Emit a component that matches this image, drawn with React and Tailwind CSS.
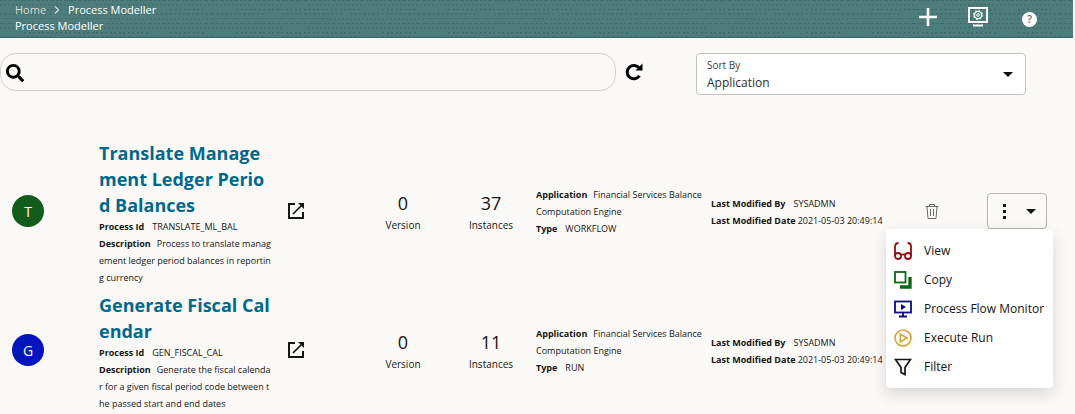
import { FaSearch } from 'react-icons/fa'

const processes = [
    {
        initial: 'T',
        color: 'bg-[#145c1c]',
        name: 'Translate Management Ledger Period Balances',
        id: 'TRANSLATE_ML_BAL',
        description: 'Process to translate management ledger period balances in reporting currency',
        instances: 37,
        type: 'WORKFLOW',
        menuOpen: true,
    },
    {
        initial: 'G',
        color: 'bg-[#0414c0]',
        name: 'Generate Fiscal Calendar',
        id: 'GEN_FISCAL_CAL',
        description: 'Generate the fiscal calendar for a given fiscal period code between the passed start and end dates',
        instances: 11,
        type: 'RUN',
        menuOpen: false,
    },
]

function OpenIcon() {
    return (
        <svg width="18" height="18" viewBox="0 0 18 18" fill="none" stroke="#161513" strokeWidth="2">
            <path d="M8 2H2v14h14v-6" />
            <path d="M6 12 15.5 2.5" strokeWidth="1.700" />
            <path d="M11 1h6v6z" fill="#161513" stroke="none" />
        </svg>
    )
}

function TrashIcon() {
    return (
        <svg width="14" height="16" viewBox="0 0 14 16" fill="none" stroke="#6b6864" strokeWidth="1">
            <path d="M0.5 3.5h13M4.5 3.5v-2h5v2M2 3.5l1 12h8l1-12" />
            <path d="M5.500 6v7M8.500 6v7" />
        </svg>
    )
}

function ViewIcon() {
    return (
        <svg width="18" height="18" viewBox="0 0 18 18" fill="none" stroke="#8f0d12" strokeWidth="1.800">
            <path d="M4.500 1C2.500 1 1 2.500 1 4.500V14M13.500 1c2 0 3.500 1.500 3.500 3.500V14" />
            <circle cx="4" cy="14" r="3" />
            <circle cx="14" cy="14" r="3" />
            <path d="M6 12.500h6" />
        </svg>
    )
}

function CopyIcon() {
    return (
        <svg width="18" height="18" viewBox="0 0 18 18" fill="none" stroke="#0f6614">
            <rect x="1" y="1" width="10.500" height="10.500" strokeWidth="1.800" />
            <path d="M16 6v10H6" strokeWidth="3.400" />
        </svg>
    )
}

function MonitorIcon() {
    return (
        <svg width="18" height="18" viewBox="0 0 18 18" fill="none" stroke="#0b0b8c" strokeWidth="1.800">
            <rect x="1" y="1.500" width="16" height="11" />
            <path d="M9 12.500V16M5 16.500h8" />
            <path d="M7 4v6l5-3z" fill="#0b0b8c" stroke="none" />
        </svg>
    )
}

function RunIcon() {
    return (
        <svg width="18" height="18" viewBox="0 0 18 18" fill="none" stroke="#dba236" strokeWidth="1.600">
            <circle cx="9" cy="9" r="8" />
            <path d="M6.300 5.200v7.600L13 9z" />
        </svg>
    )
}

function FilterIcon() {
    return (
        <svg width="18" height="18" viewBox="0 0 18 18" fill="none" stroke="#161513" strokeWidth="1.700">
            <path d="M1.500 1.500h15L11 9.500V16.500L7 14.500v-5z" />
        </svg>
    )
}

const menuItems = [
    { label: 'View', Icon: ViewIcon },
    { label: 'Copy', Icon: CopyIcon },
    { label: 'Process Flow Monitor', Icon: MonitorIcon },
    { label: 'Execute Run', Icon: RunIcon },
    { label: 'Filter', Icon: FilterIcon },
]

function HeaderTexture() {
    return (
        <svg className="absolute inset-0 h-full w-full" aria-hidden="true">
            <defs>
                <pattern id="weave" width="212" height="23" patternUnits="userSpaceOnUse">
                    <g stroke="#3b6463" fill="none">
                        <path d="M0 0.500H212" strokeDasharray="3 1 2 2 4 2" strokeOpacity="0.6" />
                        <path d="M0 5H70M96 5H212" strokeDasharray="2 2" strokeOpacity="0.9" />
                        <path d="M24 9.500H150M170 9.500H204" strokeDasharray="2 3 2 2" strokeOpacity="0.9" />
                        <path d="M0 14H52M70 14H130M138 14H212" strokeDasharray="2 2 3 2" strokeOpacity="0.9" />
                        <path d="M0 18.500H120" strokeOpacity="0.4" />
                        <path d="M110 19H212" strokeDasharray="2 2" strokeOpacity="0.9" />
                    </g>
                </pattern>
            </defs>
            <rect width="100%" height="100%" fill="url(#weave)" />
        </svg>
    )
}

function Header() {
    return (
        <header className="relative mr-0.5 h-[38px] border-b border-[#3c6766] bg-[#4c7d7b] text-white">
            <HeaderTexture />
            <div className="relative flex justify-between pr-9 pl-[15px]">
                <div>
                    <nav aria-label="Breadcrumb" className="flex h-[18px] items-center gap-2 pt-0.5 text-[11px]">
                        <a href="#home" className="text-[#dcd8d2]">Home</a>
                        <svg width="6" height="8" viewBox="0 0 6 8" fill="none" stroke="#dcd8d2" strokeWidth="1.200">
                            <path d="M1 0.500 4.500 4 1 7.500" />
                        </svg>
                        <span>Process Modeller</span>
                    </nav>
                    <h1 className="text-[11px] leading-4">Process Modeller</h1>
                </div>
                <div className="flex items-center">
                    <button type="button" aria-label="Add process" className="mr-[30px]">
                        <svg width="20" height="18" viewBox="0 0 20 18" stroke="#fff" strokeWidth="2.600">
                            <path d="M10 0v18M1 9h18" />
                        </svg>
                    </button>
                    <button type="button" aria-label="Monitor settings" className="mr-[34px]">
                        <svg width="20" height="20" viewBox="0 0 20 20" fill="none" stroke="#fff" strokeWidth="2">
                            <rect x="1" y="1" width="18" height="14" />
                            <circle cx="10" cy="8" r="3.600" strokeWidth="1.400" />
                            <circle cx="10" cy="8" r="4.600" strokeWidth="1" strokeDasharray="1.600 2" />
                            <circle cx="10" cy="8" r="1.300" strokeWidth="1" />
                            <path d="M5 18.500h10" />
                        </svg>
                    </button>
                    <button type="button" aria-label="Help" className="mt-1 flex size-[15px] items-center justify-center rounded-full bg-white text-[11px] font-semibold text-[#4c7d7b]">
                        ?
                    </button>
                </div>
            </div>
        </header>
    )
}

function Toolbar() {
    return (
        <div className="flex items-center pr-[49px]">
            <div className="flex h-[38px] flex-1 items-center self-start rounded-2xl border border-[#d6d3cf] pt-0.5 pl-[5px]">
                <FaSearch className="size-[18px] shrink-0 text-black" />
                <input type="search" aria-label="Search processes" className="h-full min-w-0 flex-1 bg-transparent px-3 text-[13px] outline-none" />
            </div>
            <button type="button" aria-label="Refresh" className="mr-[53px] ml-[9px] pb-1">
                <svg width="18" height="18" viewBox="0 0 18 18" fill="none" stroke="#000" strokeWidth="3">
                    <path d="M14.500 5.500A6.700 6.700 0 1 0 14.500 12.800" />
                    <path d="M17.500 0.500v7h-7z" fill="#000" stroke="none" />
                </svg>
            </button>
            <div className="relative h-[42px] w-[330px] rounded-sm border border-[#c4c1bd] bg-white">
                <label htmlFor="sort" className="pointer-events-none absolute top-1 left-2.5 text-[10px] leading-[14px] text-[#403d3a]">Sort By</label>
                <select id="sort" className="h-full w-full appearance-none bg-transparent pt-[18px] pr-8 pl-2.5 text-[12px] text-[#302d2a] outline-none">
                    <option>Application</option>
                </select>
                <svg className="pointer-events-none absolute top-[18px] right-3" width="10" height="5" viewBox="0 0 10 5">
                    <path d="M0 0h10L5 5z" />
                </svg>
            </div>
        </div>
    )
}

function ActionMenu() {
    return (
        <ul className="absolute top-full right-[-6px] z-10 w-[167px] rounded-sm bg-white py-[7px] shadow-[0_6px_16px_rgba(0,0,0,0.14)]">
            {menuItems.map(({ label, Icon }) => (
                <li key={label}>
                    <button type="button" className="flex h-[29px] w-full items-center gap-3 pl-2 text-[12px] whitespace-nowrap">
                        <Icon />
                        {label}
                    </button>
                </li>
            ))}
        </ul>
    )
}

function Stat({ value, label }) {
    return (
        <div className="pt-1 text-center">
            <div className="text-[18px] leading-6">{value}</div>
            <div className="text-[10px] leading-5">{label}</div>
        </div>
    )
}

function ProcessRow({ process }) {
    return (
        <li className="grid grid-cols-[87px_188fr_73px_86px_90px_175px_214px_62px_60px] items-center pr-7 pl-3 text-[9px] leading-[17px]">
            <div className={`flex size-8 items-center justify-center rounded-full text-[14px] text-white ${process.color}`}>{process.initial}</div>
            <div className="pt-1 pr-3.5">
                <h2 className="text-[18px] leading-[26px] font-bold break-all text-[#00688c]">{process.name}</h2>
                <p><b className="mr-2">Process Id</b>{process.id}</p>
                <p className="break-all"><b className="mr-1.5">Description</b>{process.description}</p>
            </div>
            <button type="button" aria-label={`Open ${process.name}`} className="w-[18px]"><OpenIcon /></button>
            <Stat value={0} label="Version" />
            <Stat value={process.instances} label="Instances" />
            <div>
                <p><b className="mr-1.5">Application</b>Financial Services Balance Computation Engine</p>
                <p><b className="mr-2">Type</b>{process.type}</p>
            </div>
            <div className="pt-0.5">
                <p><b className="mr-2">Last Modified By</b>SYSADMN</p>
                <p><b className="mr-0.5">Last Modified Date</b>2021-05-03 20:49:14</p>
            </div>
            {process.menuOpen && (
                <>
                    <button type="button" aria-label="Delete process" className="w-[14px]"><TrashIcon /></button>
                    <div className="relative">
                        <button type="button" aria-label="More actions" aria-expanded="true" className="flex h-9 w-full items-center justify-between rounded-sm border border-[#b5b2ad] pr-2.5 pl-[15px]">
                            <svg width="3" height="15" viewBox="0 0 3 15">
                                <path d="M0 0h3v3H0zM0 6h3v3H0zM0 12h3v3H0z" fill="#161513" />
                            </svg>
                            <svg width="10" height="5" viewBox="0 0 10 5">
                                <path d="M0 0h10L5 5z" fill="#161513" />
                            </svg>
                        </button>
                        <ActionMenu />
                    </div>
                </>
            )}
        </li>
    )
}

export default function App() {
    return (
        <div className="min-h-screen bg-[#fbf9f8] font-['Open_Sans','Noto_Sans',sans-serif] text-[#161513]">
            <Header />
            <main className="pt-[15px]">
                <Toolbar />
                <ul className="flex flex-col gap-0.5 pt-[41px]">
                    {processes.map((process) => (
                        <ProcessRow key={process.id} process={process} />
                    ))}
                </ul>
            </main>
        </div>
    )
}
